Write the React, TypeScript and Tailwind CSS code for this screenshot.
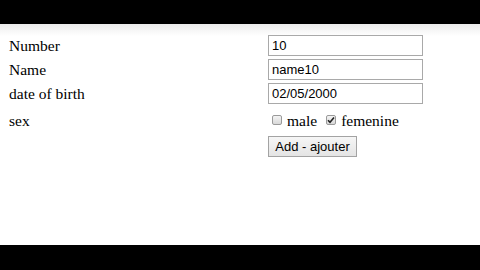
const serif = "font-['Liberation_Serif','Times_New_Roman',serif]";
const sans = "font-['Liberation_Sans',Arial,sans-serif]";

function FakeCheckbox({ checked }: { checked?: boolean }) {
  return (
    <span className="flex h-[10px] w-[10px] items-center justify-center rounded-[2px] border border-[#9a9a9a] bg-gradient-to-b from-[#f4f4f4] to-[#d8d8d8]">
      {checked && (
        <svg width="8" height="8" viewBox="0 0 8 8">
          <path d="M1 4.2 L3 6.3 L7 1.5" fill="none" stroke="#222" strokeWidth="1.6" />
        </svg>
      )}
    </span>
  );
}

function TextField({ value }: { value: string }) {
  return (
    <input
      type="text"
      defaultValue={value}
      className={`h-[21px] w-[155px] border border-[#a9a9a9] bg-white px-[3px] text-[13px] text-black outline-none ${sans}`}
    />
  );
}

export default function App() {
  const rows = [
    { label: "Number", value: "10" },
    { label: "Name", value: "name10" },
    { label: "date of birth", value: "02/05/2000" },
  ];

  return (
    <div className="flex h-[270px] w-[480px] flex-col bg-black">
      <div className="h-[24px]" />
      <div className={`flex h-[221px] flex-col bg-gradient-to-b from-[#ececec] to-white to-[12px] pt-[11px] text-black ${serif}`}>
        <div className="flex flex-col gap-[3px]">
          {rows.map((row) => (
            <div key={row.label} className="flex items-center">
              <span className="w-[268px] pl-[9px] text-[15.5px] leading-[21px]">
                {row.label}
              </span>
              <TextField value={row.value} />
            </div>
          ))}
        </div>

        {/* sex row, checkboxes */}
        <div className="mt-[4px] flex h-[26px] items-center">
          <span className="w-[268px] pl-[9px] text-[15.5px]">sex</span>
          <div className="flex items-center pl-[4px] text-[15.5px]">
            <span className="-mt-[2px]">
              <FakeCheckbox />
            </span>
            <span className="ml-[5px]">male</span>
            <span className="-mt-[2px] ml-[9px]">
              <FakeCheckbox checked />
            </span>
            <span className="ml-[5px]">femenine</span>
          </div>
        </div>

        <div className="mt-[2px] flex">
          <span className="w-[268px]" />
          <button
            type="button"
            className={`h-[21px] w-[89px] border border-[#a3a3a3] bg-gradient-to-b from-[#f6f6f6] to-[#e4e4e4] text-[13px] text-black ${sans}`}
          >
            Add - ajouter
          </button>
        </div>
      </div>
    </div>
  );
}
